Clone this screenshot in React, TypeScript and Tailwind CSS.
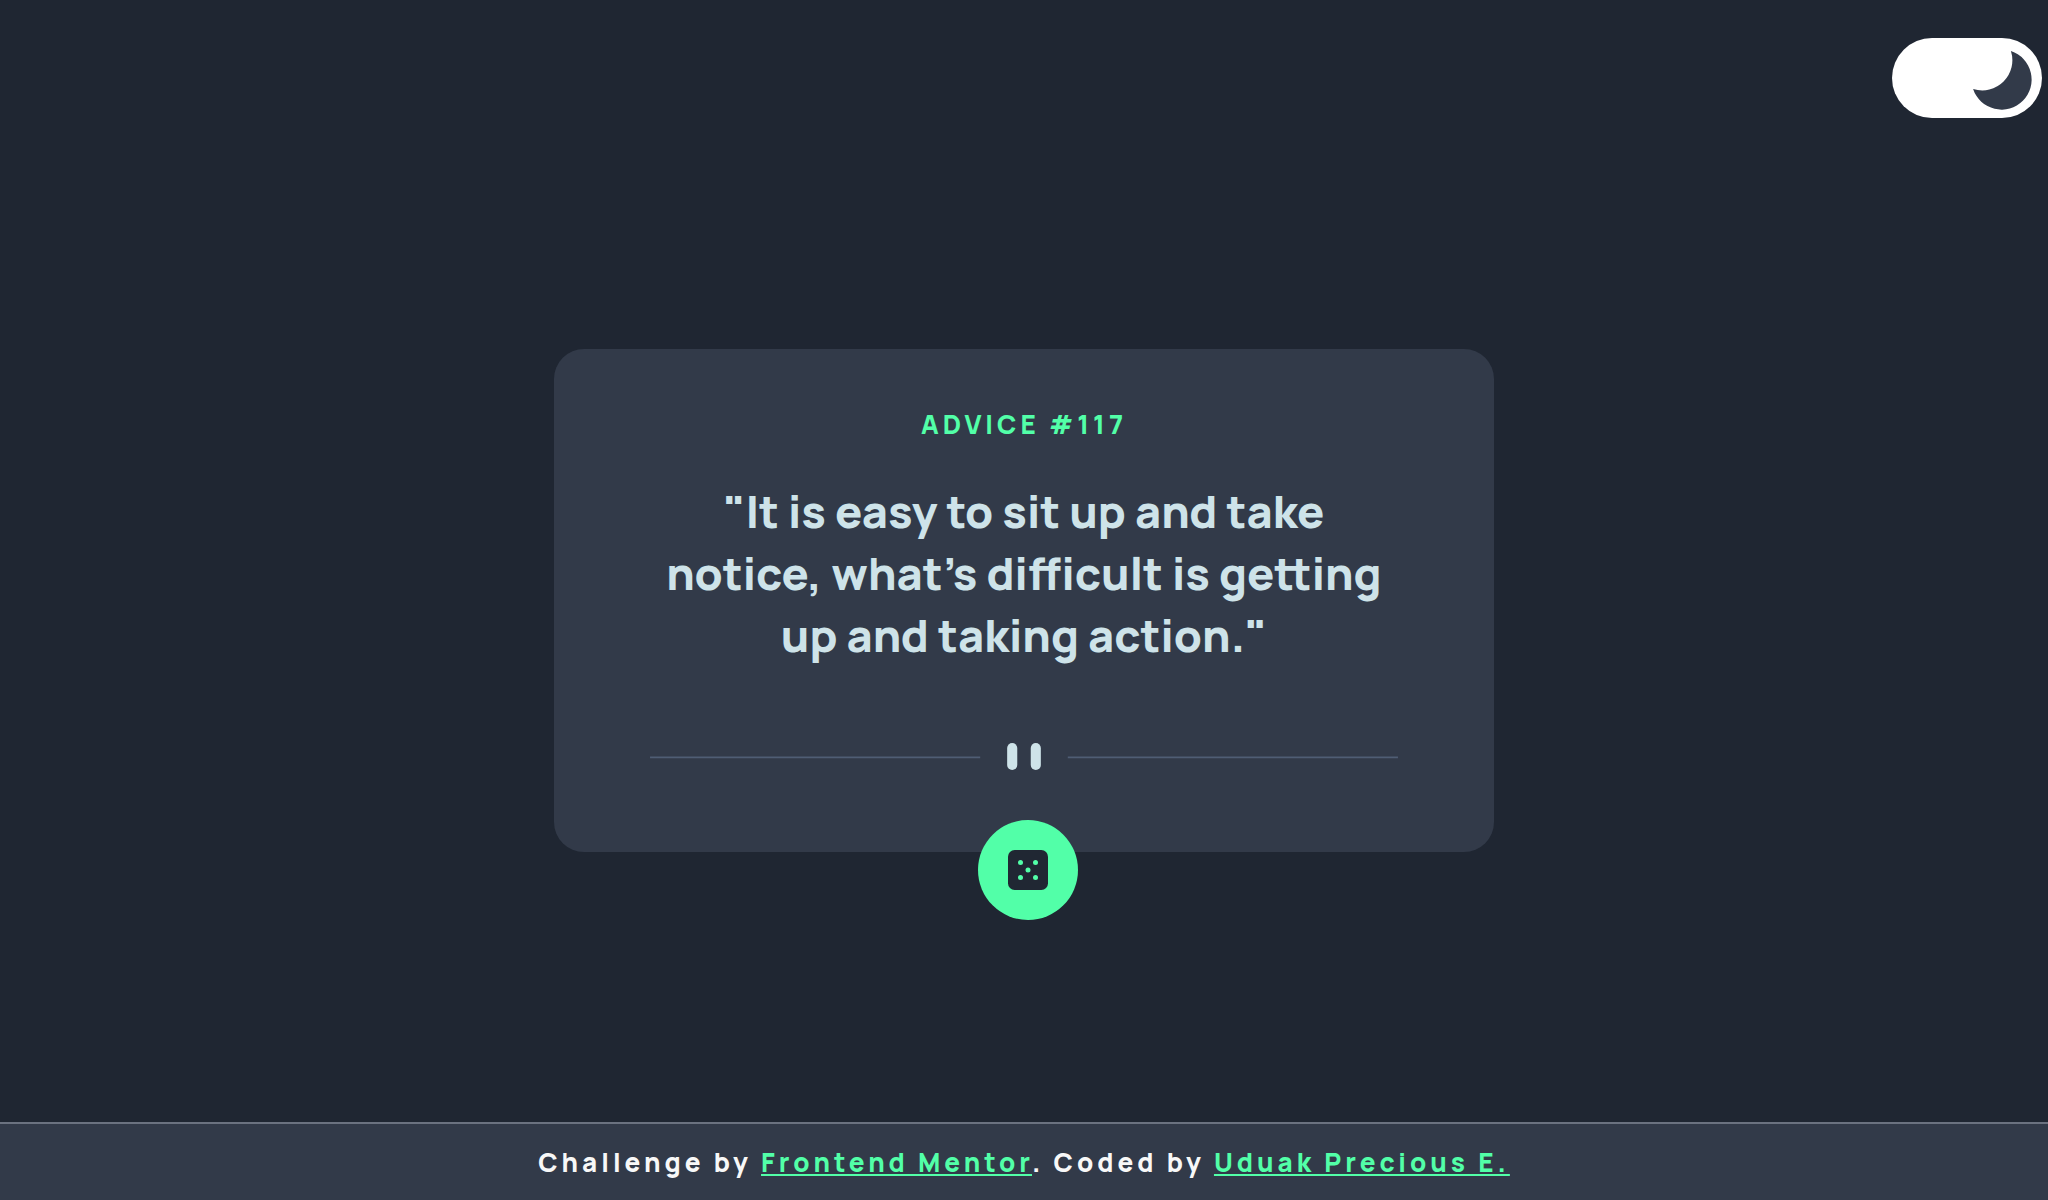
import { useState } from "react";

const ADVICE = {
  id: 117,
  text: "It is easy to sit up and take notice, what’s difficult is getting up and taking action.",
};

function ThemeToggle() {
  const [dark, setDark] = useState(true);
  return (
    <label className="block h-20 w-[150px] cursor-pointer rounded-full bg-white">
      <input
        type="checkbox"
        role="switch"
        aria-label="Dark theme"
        checked={dark}
        onChange={(e) => setDark(e.target.checked)}
        className="peer sr-only"
      />
      <svg viewBox="0 0 150 80" className="h-full w-full" aria-hidden="true">
        <path
          d="M118.9 13.1A30 30 0 1 1 81.1 50.9A30 30 0 0 0 118.9 13.1Z"
          fill="#323a49"
        />
      </svg>
    </label>
  );
}

function Divider() {
  return (
    <svg viewBox="0 0 444 16" className="h-auto w-full overflow-visible" aria-hidden="true">
      <path fill="#4F5D74" d="M0 8h196v1H0zM248 8h196v1H248z" />
      <g fill="#CEE3E9">
        <rect x="212" width="6" height="16" rx="3" />
        <rect x="226" width="6" height="16" rx="3" />
      </g>
    </svg>
  );
}

function DiceIcon() {
  return (
    <svg viewBox="0 0 24 24" className="size-10" aria-hidden="true">
      <rect width="24" height="24" rx="4" fill="#202733" />
      <g fill="#52ffa8">
        <circle cx="7.5" cy="7.5" r="1.5" />
        <circle cx="16.5" cy="7.5" r="1.5" />
        <circle cx="12" cy="12" r="1.5" />
        <circle cx="7.5" cy="16.5" r="1.5" />
        <circle cx="16.5" cy="16.5" r="1.5" />
      </g>
    </svg>
  );
}

export default function App() {
  return (
    <div className="flex min-h-screen flex-col bg-[#1f2632] font-['Manrope','Inter',sans-serif] font-extrabold">
      <header className="flex justify-end pt-[38px] pr-1.5">
        <ThemeToggle />
      </header>

      <main className="flex flex-1 flex-col items-center justify-center px-4 pb-[39px]">
        <section className="relative w-full max-w-[940px] rounded-[30px] bg-[#323a49] px-24 pt-[57px] pb-[83px] text-center">
          <h1 className="text-[26px] leading-9 tracking-[4px] text-[#52ffa8] uppercase">
            Advice #{ADVICE.id}
          </h1>
          <p className="mt-[38px] text-[45px] leading-[62px] text-[#cee3e9]">
            {`"${ADVICE.text}"`}
          </p>
          <div className="mt-[77px]">
            <Divider />
          </div>
          <div className="absolute inset-x-0 -bottom-[68px] flex justify-center pl-2">
            <button
              type="button"
              aria-label="New advice"
              className="flex size-[100px] cursor-pointer items-center justify-center rounded-full bg-[#52ffa8]"
            >
              <DiceIcon />
            </button>
          </div>
        </section>
      </main>

      <footer className="border-t-2 border-[#6b7280] bg-[#323a49] px-4 py-5 text-center text-[26px] leading-9 tracking-[4px] text-[#f8f8f8]">
        Challenge by{" "}
        <a href="https://www.frontendmentor.io" className="text-[#52ffa8] underline">
          Frontend Mentor
        </a>
        . Coded by{" "}
        <a href="#author" className="text-[#52ffa8] underline">
          Uduak Precious E.
        </a>
      </footer>
    </div>
  );
}
